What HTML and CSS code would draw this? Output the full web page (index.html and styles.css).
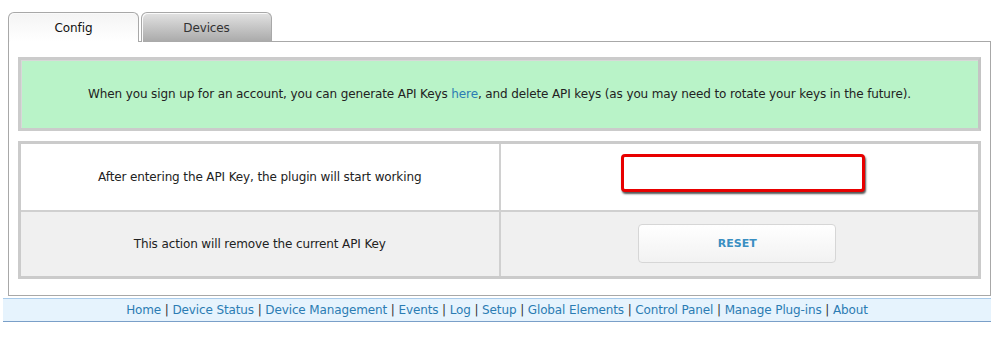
FILE: index.html
```html
<!DOCTYPE html>
<html lang="en">
<head>
  <meta charset="UTF-8" />
  <title>API Key Config</title>
  <link rel="stylesheet" href="styles.css">
</head>
<body>
  <div class="tabs">
    <div class="tab active">Config</div>
    <div class="tab">Devices</div>
  </div>
  <div class="panel">
    <div class="notice">
      <p>When you sign up for an account, you can generate API Keys <a href="#">here</a>, and delete API keys (as you may need to rotate your keys in the future).</p>
    </div>
    <table class="settings">
      <tr class="row-white">
        <td>After entering the API Key, the plugin will start working</td>
        <td><input type="text" class="api-input" /></td>
      </tr>
      <tr class="row-grey">
        <td>This action will remove the current API Key</td>
        <td><button class="reset-btn">RESET</button></td>
      </tr>
    </table>
  </div>
  <div class="footer">
    <a href="#">Home</a> | <a href="#">Device Status</a> | <a href="#">Device Management</a> | <a href="#">Events</a> | <a href="#">Log</a> | <a href="#">Setup</a> | <a href="#">Global Elements</a> | <a href="#">Control Panel</a> | <a href="#">Manage Plug-ins</a> | <a href="#">About</a>
  </div>
</body>
</html>
```

FILE: styles.css
```css
* {
  box-sizing: border-box;
}

body {
  margin: 0;
  padding: 12px 0 0 0;
  font-family: "DejaVu Sans", Verdana, sans-serif;
  font-size: 12px;
  letter-spacing: -0.12px;
  color: #222;
  background: #fff;
}

a {
  color: #2b7cb3;
  text-decoration: none;
}

.tabs {
  display: flex;
  gap: 2px;
  margin-left: 8px;
  height: 29px;
}

.tab {
  width: 131px;
  height: 30px;
  border: 1px solid #a8a8a8;
  border-bottom: none;
  border-radius: 6px 6px 0 0;
  text-align: center;
  line-height: 31px;
  font-size: 12px;
  color: #333;
  background: linear-gradient(#e2e2e2, #a9a9a9);
  box-shadow: inset 1px 1px 0 #fafafa;
}

.tab.active {
  position: relative;
  z-index: 1;
  background: linear-gradient(#f4f4f4, #ffffff);
  color: #111;
}

.panel {
  width: 983px;
  margin-left: 8px;
  border: 1px solid #a8a8a8;
  padding: 15px 9px 16px 9px;
}

.notice {
  height: 74px;
  background: #b9f3c8;
  border: 3px solid #cbcbcb;
  border-right-color: #c4c4c4;
  box-shadow: inset 1px 1px 0 #d8d8d8;
  display: flex;
  align-items: center;
  justify-content: center;
  text-align: center;
  font-size: 12px;
  margin-bottom: 10px;
}

.notice p {
  margin: 0;
}

.settings {
  width: 100%;
  border-collapse: collapse;
  border: 3px solid #cbcbcb;
}

.settings td {
  border: 2px solid #d0d0d0;
  width: 50%;
  text-align: center;
  font-size: 12px;
}

.row-white td {
  background: #fff;
  height: 68px;
  padding-top: 2px;
}

.row-grey td {
  background: #f0f0f0;
  height: 67px;
}

.api-input {
  display: block;
  width: 244px;
  height: 38px;
  margin: 0 auto 8px 119px;
  border: 3px solid #e80000;
  border-radius: 4px;
  box-shadow: 1px 2px 2px #555;
  outline: none;
}

.reset-btn {
  width: 198px;
  height: 39px;
  margin-right: 4px;
  border: 1px solid #d6d6d6;
  border-radius: 4px;
  background: linear-gradient(#ffffff, #f2f2f2);
  color: #3a8fc2;
  font-family: "DejaVu Sans", Verdana, sans-serif;
  font-weight: bold;
  font-size: 11px;
  cursor: pointer;
}

.footer {
  width: 988px;
  margin: 2px 0 0 3px;
  border-top: 1px solid #a9cbea;
  border-bottom: 1px solid #7a9fc8;
  background: #e6f3fd;
  text-align: center;
  font-size: 12px;
  line-height: 21px;
  padding-top: 1px;
  color: #333;
}
```
